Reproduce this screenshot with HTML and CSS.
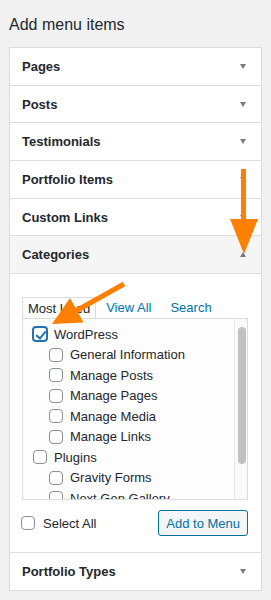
FILE: index.html
```html
<!DOCTYPE html>
<html lang="en">
<head>
  <meta charset="UTF-8" />
  <meta name="viewport" content="width=device-width, initial-scale=1.0"/>
  <title>Add menu items</title>
  <link rel="stylesheet" href="styles.css">
</head>
<body>
  <h2 class="titulo">Add menu items</h2>

  <div class="accordion">
    <div class="secao"><span>Pages</span><i class="seta"></i></div>
    <div class="secao"><span>Posts</span><i class="seta"></i></div>
    <div class="secao"><span>Testimonials</span><i class="seta"></i></div>
    <div class="secao"><span>Portfolio Items</span><i class="seta"></i></div>
    <div class="secao"><span>Custom Links</span><i class="seta"></i></div>
    <div class="secao aberta"><span>Categories</span><i class="seta cima"></i></div>

    <div class="conteudo">
      <div class="abas">
        <span class="aba ativa">Most Used</span>
        <a class="aba">View All</a>
        <a class="aba">Search</a>
      </div>

      <div class="painel">
        <ul class="lista">
          <li><label><input type="checkbox" checked> WordPress</label>
            <ul>
              <li><label><input type="checkbox"> General Information</label></li>
              <li><label><input type="checkbox"> Manage Posts</label></li>
              <li><label><input type="checkbox"> Manage Pages</label></li>
              <li><label><input type="checkbox"> Manage Media</label></li>
              <li><label><input type="checkbox"> Manage Links</label></li>
            </ul>
          </li>
          <li><label><input type="checkbox"> Plugins</label>
            <ul>
              <li><label><input type="checkbox"> Gravity Forms</label></li>
              <li><label><input type="checkbox"> Next Gen Gallery</label></li>
            </ul>
          </li>
        </ul>
        <div class="rolagem"><div class="barra"></div></div>
      </div>

      <div class="rodape">
        <label class="todos"><input type="checkbox"> Select All</label>
        <button class="botao">Add to Menu</button>
      </div>
    </div>

    <div class="secao ultima"><span>Portfolio Types</span><i class="seta"></i></div>
  </div>

  <!-- setas de destaque -->
  <svg class="setas" width="271" height="600" viewBox="0 0 271 600">
    <rect x="241" y="169" width="5" height="52" fill="#ff7f00"/>
    <polygon points="230,219 258,219 244,254" fill="#ff7f00"/>
    <line x1="124" y1="284" x2="74" y2="312" stroke="#ff7f00" stroke-width="5"/>
    <polygon points="52,324 83.5,322.5 70,298" fill="#ff7f00"/>
  </svg>
</body>
</html>
```

FILE: styles.css
```css
body {
  font-family: "Liberation Sans", Arial, sans-serif;
  margin: 0;
  padding: 0 9px;
  background-color: #f1f1f1;
  color: #23282d;
  font-size: 13px;
}

.titulo {
  font-size: 16px;
  font-weight: 400;
  margin: 0;
  padding-top: 15px;
  height: 47px;
  line-height: 20px;
  box-sizing: border-box;
}

.accordion {
  background: #fff;
  border: 1px solid #ddd;
  box-shadow: 0 1px 1px rgba(0, 0, 0, 0.04);
}

.secao {
  height: 36.7px;
  border-bottom: 1px solid #ddd;
  display: flex;
  align-items: center;
  justify-content: space-between;
  padding: 0 15px 0 12px;
  font-weight: 600;
  font-size: 13px;
}

.secao.aberta {
  background: #f5f5f5;
}

.secao.ultima {
  border-bottom: none;
  border-top: 1px solid #ddd;
}

.seta {
  width: 0;
  height: 0;
  border-left: 3.5px solid transparent;
  border-right: 3.5px solid transparent;
  border-top: 5px solid #787c82;
}

.seta.cima {
  border-top: none;
  border-bottom: 5px solid #787c82;
}

.conteudo {
  padding: 23px 13px 16px 12px;
}

.abas {
  display: flex;
  height: 21px;
}

.aba {
  padding: 0 9px 0 10px;
  line-height: 21px;
  color: #0073aa;
}

.aba.ativa {
  color: #23282d;
  border: 1px solid #ddd;
  border-bottom: none;
  background: #fdfdfd;
  padding: 0 5px;
}

.painel {
  border: 1px solid #ddd;
  background: #fdfdfd;
  height: 180px;
  display: flex;
  overflow: hidden;
}

.lista {
  flex: 1;
  list-style: none;
  margin: 0;
  padding: 5px 0 0 10px;
}

.lista ul {
  list-style: none;
  margin: 0;
  padding: 0 0 0 16px;
}

.lista li label {
  display: flex;
  align-items: center;
  height: 20.5px;
  gap: 7px;
  white-space: nowrap;
}

input[type="checkbox"] {
  appearance: none;
  -webkit-appearance: none;
  width: 14px;
  height: 14px;
  margin: 0;
  border: 1px solid #8c8f94;
  border-radius: 4px;
  background: #fff;
  flex-shrink: 0;
  position: relative;
}

input[type="checkbox"]:checked {
  width: 16px;
  height: 16px;
  margin-left: -1px;
  margin-right: -1px;
  border: 2px solid #2271b1;
}

input[type="checkbox"]:checked::after {
  content: "";
  position: absolute;
  left: 3.5px;
  top: 0.5px;
  width: 4px;
  height: 8px;
  border-right: 2px solid #2271b1;
  border-bottom: 2px solid #2271b1;
  transform: rotate(40deg);
}

.rolagem {
  width: 13px;
  border-left: 1px solid #e8e8e8;
  background: #fafafa;
  padding: 8px 0 0 3px;
  box-sizing: border-box;
}

.barra {
  width: 8px;
  height: 137px;
  border-radius: 4px;
  background: #c1c1c1;
}

.rodape {
  display: flex;
  justify-content: space-between;
  align-items: center;
  margin-top: 10px;
}

.todos {
  display: flex;
  align-items: center;
  gap: 8px;
  margin-left: -1px;
}

.botao {
  font-family: inherit;
  font-size: 13px;
  color: #0071a1;
  border: 1px solid #0071a1;
  background: #f3f5f6;
  border-radius: 3px;
  height: 26px;
  padding: 0 7px;
}

.setas {
  position: absolute;
  left: 0;
  top: 0;
  pointer-events: none;
}
```
